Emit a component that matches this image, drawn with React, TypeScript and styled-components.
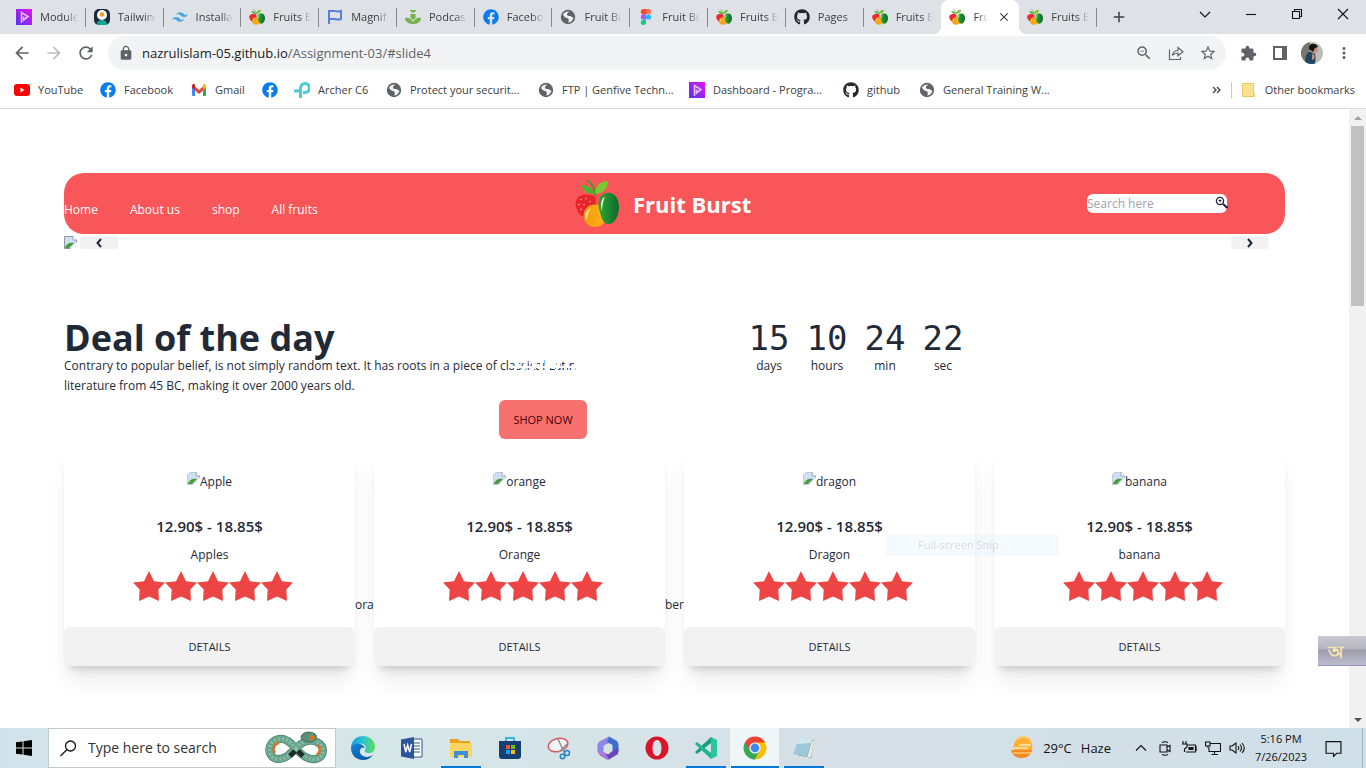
import React from 'react';
import styled, { createGlobalStyle, css } from 'styled-components';
import {
  MdAdd, MdArrowBack, MdArrowForward, MdClose, MdExtension, MdLock, MdMoreVert, MdRefresh, MdStarBorder, MdZoomOut,
} from 'react-icons/md';
import { FaFacebook, FaGithub } from 'react-icons/fa';

const GlobalStyle = createGlobalStyle`
  *, *::before, *::after { box-sizing: border-box; }
  body { margin: 0; background: #fff; color: #1f2937; font: 12px/20px "Open Sans", "Noto Sans", sans-serif; overflow: hidden; }
  button, input { font: inherit; color: inherit; border: 0; padding: 0; background: none; }
  a { color: inherit; text-decoration: none; }
  h1, p { margin: 0; }
  svg { display: block; flex: none; }
`;

/* ---------- browser frame ---------- */

const Screen = styled.div`
  display: flex;
  flex-direction: column;
  height: 100vh;
`;

const TabStrip = styled.header`
  display: flex;
  height: 34px;
  padding-left: 8px;
  background: #dee1e6;
  color: #3c4043;
`;

const TabList = styled.div`
  flex: 0 1 1089px;
  min-width: 0;
  display: grid;
  grid-template-columns: repeat(14, minmax(0, 1fr));
`;

const Tab = styled.button<{ $active?: boolean; $divider?: boolean }>`
  position: relative;
  display: flex;
  align-items: center;
  gap: 8px;
  padding: 0 8px;
  min-width: 0;
  ${(p) => p.$divider && css`
    background: linear-gradient(#85888d, #85888d) right 8px / 1px 19px no-repeat;
  `}
  ${(p) => p.$active && css`
    background: #fff;
    border-radius: 8px 8px 0 0;
    &::before, &::after {
      content: '';
      position: absolute;
      bottom: 0;
      width: 8px;
      height: 8px;
    }
    &::before { right: 100%; background: radial-gradient(circle at 0 0, transparent 8px, #fff 8px); }
    &::after { left: 100%; background: radial-gradient(circle at 100% 0, transparent 8px, #fff 8px); }
  `}
`;

const TabTitle = styled.span`
  flex: 1;
  min-width: 0;
  overflow: hidden;
  white-space: nowrap;
  text-align: left;
  font-size: 11px;
  mask-image: linear-gradient(to left, transparent 0, #000 12px);
`;

const NewTab = styled.button`
  display: grid;
  place-items: center;
  width: 44px;
`;

const WindowButtons = styled.div`
  display: flex;
  margin-left: auto;
  height: 28px;
`;

const WindowButton = styled.button`
  display: grid;
  place-items: center;
  width: 46px;
  color: #111;
`;

const Toolbar = styled.div`
  display: flex;
  align-items: center;
  height: 38px;
  padding: 0 6px 0 12px;
  color: #5f6368;
`;

const IconButton = styled.button<{ $w?: number; $faded?: boolean }>`
  display: grid;
  place-items: center;
  flex: none;
  width: ${(p) => p.$w ?? 32}px;
  height: 32px;
  color: ${(p) => (p.$faded ? '#bdbfc2' : '#5f6368')};
`;

const Omnibox = styled.div`
  flex: 1;
  min-width: 0;
  display: flex;
  align-items: center;
  height: 34px;
  margin: 0 6px 0 12px;
  padding: 0 2px 0 10px;
  border-radius: 17px;
  background: #f1f3f4;
`;

const Address = styled.a`
  flex: 1;
  min-width: 0;
  margin-left: 8px;
  font-size: 13px;
  line-height: 24px;
  white-space: nowrap;
  overflow: hidden;
  color: #5f6368;
  b { font-weight: 400; color: #202124; }
`;

const BookmarkBar = styled.nav`
  display: flex;
  align-items: center;
  height: 37px;
  padding: 0 11px 0 14px;
  border-bottom: 1px solid #dadce0;
  color: #3c4043;
  font-size: 11px;
`;

const Bookmark = styled.a<{ $w: number }>`
  display: flex;
  align-items: center;
  gap: 8px;
  flex: 0 0 ${(p) => p.$w}px;
  white-space: nowrap;
`;

const BookmarkEnd = styled.div`
  display: flex;
  align-items: center;
  gap: 10px;
  margin-left: auto;
  white-space: nowrap;
`;

const Rule = styled.span`
  width: 1px;
  height: 16px;
  background: #c6c8cb;
`;

const OtherLink = styled.a`
  display: flex;
  align-items: center;
  gap: 10px;
`;

/* ---------- web page ---------- */

const Viewport = styled.div`
  position: relative;
  flex: 1;
  min-height: 0;
  display: flex;
`;

const Page = styled.main`
  flex: 1;
  min-width: 0;
  padding: 64px;
  overflow: hidden;
`;

const ScrollTrack = styled.div`
  display: flex;
  flex-direction: column;
  align-items: center;
  width: 17px;
  background: #f1f1f1;
`;

const ScrollArrow = styled.button`
  display: grid;
  place-items: center;
  width: 17px;
  height: 17px;
`;

const ScrollThumb = styled.div`
  width: 13px;
  height: 29%;
  margin-bottom: auto;
  background: #c1c1c1;
`;

const SiteHeader = styled.header`
  display: grid;
  grid-template-columns: 511fr 512fr 198fr;
  align-items: center;
  height: 61px;
  border-radius: 20px;
  background: #f95659;
  color: #fff;
`;

const SiteNav = styled.nav`
  display: flex;
  gap: 32px;
  padding-top: 12px;
`;

const Brand = styled.div`
  display: flex;
  align-items: center;
  gap: 14px;
  font-size: 22px;
  line-height: 32px;
  font-weight: 700;
`;

const SearchField = styled.label`
  position: relative;
  width: 140px;
  height: 19px;
  input {
    display: block;
    width: 100%;
    height: 19px;
    border-radius: 6px;
    background: #fff;
    color: #1f2937;
    &::placeholder { color: #9ca3af; opacity: 1; }
  }
  svg { position: absolute; top: 2px; right: -1px; }
`;

const Slide = styled.section`
  display: flex;
  align-items: flex-start;
  gap: 3px;
  height: 86px;
  padding: 2px 16px 0 0;
`;

const SlideButton = styled.button<{ $end?: boolean }>`
  display: grid;
  place-items: center;
  width: 38px;
  height: 13px;
  border-radius: 3px;
  background: #f2f2f2;
  margin-left: ${(p) => (p.$end ? 'auto' : '0')};
`;

const Deal = styled.section`
  display: grid;
  grid-template-columns: 523fr 536fr;
  column-gap: 162px;
`;

const DealTitle = styled.h1`
  font-size: 36px;
  line-height: 36px;
  font-weight: 700;
`;

const Worn = styled.span`
  position: relative;
  &::after {
    content: '';
    position: absolute;
    inset: 0;
    background:
      repeating-linear-gradient(105deg, #fff 0 3px, transparent 3px 8px),
      linear-gradient(transparent 50%, #fff 50% 65%, transparent 65%);
  }
`;

const ShopButton = styled.button`
  display: block;
  margin: 4px 0 0 auto;
  width: 88px;
  height: 39px;
  border-radius: 6px;
  background: #f87171;
  color: #470000;
  font-size: 11px;
  font-weight: 500;
`;

const Countdown = styled.div`
  display: flex;
  gap: 18px;
  align-items: flex-start;
`;

const CountItem = styled.div`
  width: 40px;
  text-align: center;
`;

const CountValue = styled.div`
  display: flex;
  justify-content: center;
  font: 34px/36px "DejaVu Sans Mono", monospace;
`;

const Cards = styled.section`
  display: grid;
  grid-template-columns: repeat(4, minmax(0, 1fr));
  gap: 19px;
  margin-top: 5px;
`;

const Card = styled.article`
  position: relative;
  display: flex;
  flex-direction: column;
  align-items: center;
  padding-top: 28px;
  border-radius: 13px 13px 6px 6px;
  background: #fff;
  box-shadow: 0 20px 25px -5px rgba(0, 0, 0, 0.08), 0 8px 10px -6px rgba(0, 0, 0, 0.2);
`;

const CardPicture = styled.figure`
  display: flex;
  margin: 0;
  height: 20px;
`;

const Price = styled.div`
  margin-top: 24px;
  font-size: 15px;
  font-weight: 600;
`;

const CardName = styled.div`
  margin-top: 9px;
`;

const Stars = styled.div`
  display: flex;
  padding-left: 7px;
  margin: 5px 0 25px;
`;

const DetailsButton = styled.button`
  width: 100%;
  height: 39px;
  border-radius: 6px;
  background: #f2f2f2;
  font-size: 11px;
  font-weight: 500;
`;

const Peek = styled.span`
  position: absolute;
  left: 100%;
  top: 151px;
  width: 19px;
  white-space: nowrap;
`;

const SnipGhost = styled.div`
  position: absolute;
  right: 307px;
  top: 425px;
  width: 173px;
  height: 22px;
  padding-left: 32px;
  line-height: 22px;
  font-size: 11px;
  color: rgba(120, 100, 110, 0.22);
  background: rgba(214, 236, 250, 0.28);
`;

const KeyboardBadge = styled.div`
  position: absolute;
  right: 0;
  top: 527px;
  width: 48px;
  height: 30px;
  display: grid;
  place-items: center;
  padding-right: 12px;
  background: linear-gradient(#c9c9d3, #b4b4c0 45%, #9d9daa 50%, #bdbdd2);
  border-bottom: 1px solid #9095b8;
  color: #f8e7ad;
  font-size: 18px;
  font-weight: 700;
  line-height: 28px;
`;

/* ---------- task bar ---------- */

const TaskBar = styled.footer`
  display: flex;
  height: 40px;
  background: linear-gradient(90deg, #d2e2ea, #d5e6e8 30%, #d6e0e6 60%, #cfdfe8);
  color: #111;
`;

const StartButton = styled.button`
  display: grid;
  place-items: center;
  width: 48px;
`;

const TaskSearch = styled.label`
  display: flex;
  align-items: center;
  width: 288px;
  margin-right: 2px;
  padding: 0 8px 0 11px;
  border: 1px solid #c4c9cc;
  background: #fff;
  input {
    flex: 1;
    min-width: 0;
    margin-left: 11px;
    font-size: 14px;
    &::placeholder { color: #333; opacity: 1; }
  }
`;

const TaskButton = styled.button<{ $open?: boolean; $front?: boolean }>`
  display: grid;
  place-items: center;
  width: 49px;
  ${(p) => p.$open && css`background: linear-gradient(#0078d7, #0078d7) center bottom / 40px 2px no-repeat;`}
  ${(p) => p.$front && css`background: linear-gradient(#0078d7, #0078d7) center bottom / 48px 2px no-repeat, #f0f5f8;`}
`;

const Tray = styled.div`
  display: flex;
  align-items: center;
  margin-left: auto;
  padding-right: 3px;
`;

const Weather = styled.button`
  display: flex;
  align-items: center;
  gap: 9px;
  margin-right: 18px;
  font-size: 13px;
`;

const TrayButton = styled.button`
  display: grid;
  place-items: center;
  width: 24px;
  height: 40px;
`;

const Clock = styled.time`
  width: 64px;
  text-align: center;
  font-size: 11px;
  line-height: 18px;
`;

const Notices = styled.button`
  display: grid;
  place-items: center;
  width: 40px;
  height: 40px;
  margin-right: 9px;
`;

const Edge = styled.span`
  width: 1px;
  height: 40px;
  background: #a9b8c1;
`;

/* ---------- drawings ---------- */

const Pheron = () => (
  <svg width="16" height="16" viewBox="0 0 16 16" aria-hidden="true">
    <defs><linearGradient id="ph" x1="0" x2="1" y1="1" y2="0"><stop stopColor="#5a2ff0" /><stop offset="1" stopColor="#e414ee" /></linearGradient></defs>
    <rect width="16" height="16" fill="url(#ph)" />
    <path d="M5.500 14V3.500L12 7.500 7.500 11V7.500" fill="none" stroke="#fff" strokeOpacity=".7" strokeWidth="1.600" />
  </svg>
);

const Astro = () => (
  <svg width="16" height="16" viewBox="0 0 16 16" aria-hidden="true">
    <rect width="16" height="16" rx="5" fill="#1c2a3c" />
    <circle cx="8" cy="6" r="5" fill="#fff" /><circle cx="8" cy="5.500" r="2.300" fill="#f59a23" />
    <path d="M3 16c0-4 2-5 5-5s5 1 5 5z" fill="#12a594" />
  </svg>
);

const Tailwind = () => (
  <svg width="16" height="16" viewBox="0 0 24 24" fill="#44a8e0" aria-hidden="true">
    <path d="M12 4.800c-3.200 0-5.200 1.600-6 4.800 1.200-1.600 2.600-2.200 4.200-1.800.913.228 1.565.89 2.288 1.624C13.666 10.618 15.027 12 18 12c3.200 0 5.200-1.600 6-4.800-1.200 1.600-2.600 2.200-4.200 1.800-.913-.228-1.565-.89-2.288-1.624C16.337 6.182 14.976 4.800 12 4.800zM6 12c-3.200 0-5.200 1.600-6 4.800 1.200-1.600 2.600-2.200 4.200-1.800.913.228 1.565.89 2.288 1.624C7.666 17.818 9.027 19.200 12 19.200c3.200 0 5.200-1.600 6-4.800-1.200 1.600-2.600 2.200-4.200 1.800-.913-.228-1.565-.89-2.288-1.624C10.337 13.382 8.976 12 6 12z" />
  </svg>
);

const Fruit = ({ w = 16, h = 16 }: { w?: number; h?: number }) => (
  <svg width={w} height={h} viewBox="0 0 44 50" preserveAspectRatio="none" aria-hidden="true">
    <defs>
      <linearGradient id="mango"><stop stopColor="#2fa52f" /><stop offset="1" stopColor="#0b6b31" /></linearGradient>
      <linearGradient id="orng" x1="0" x2="1"><stop stopColor="#f79a10" /><stop offset="1" stopColor="#fdb515" /></linearGradient>
    </defs>
    <path d="M20 18C16 15 4 14 1 22c-2 7 3 15 9 18 7-4 13-12 10-22z" fill="#e8232b" />
    <g fill="#ffb3a8"><circle cx="6" cy="21" r=".8" /><circle cx="11" cy="20" r=".8" /><circle cx="4" cy="26" r=".8" /><circle cx="9" cy="26" r=".8" /><circle cx="6" cy="31" r=".8" /><circle cx="15" cy="23" r=".8" /></g>
    <circle cx="20" cy="37.500" r="11.500" fill="url(#orng)" />
    <path d="M12 42c-3-6 0-11 4-12-3 4-4 7-4 12z" fill="#ffeaa0" />
    <path d="M29 15c9-4 15 4 15 13 0 10-5 18-10 18-7 0-8-9-10-16-1-7 0-13 5-15z" fill="url(#mango)" />
    <path d="M27 33c-2-7-1-13 3-15-2 5-3 9-3 15z" fill="#eaffd8" />
    <path d="M20 17C20 10 17 4 12 1M20 17c1-6 3-9 7-12" fill="none" stroke="#3f9b2b" strokeWidth="1.800" />
    <path d="M19 15C12 16 8 12 6 6c7 0 12 3 13 9z" fill="#51b12c" />
    <path d="M20 15c0-8 5-13 13-13 0 8-5 13-13 13z" fill="#7cc832" />
  </svg>
);

const Flag = () => (
  <svg width="16" height="16" viewBox="0 0 16 16" fill="none" stroke="#5b7fd8" strokeWidth="2" aria-hidden="true">
    <path d="M2 15V2h6c2 0 3 1.500 6 0v8c-3 1.500-5 0-7 0H2" />
  </svg>
);

const Podcast = () => (
  <svg width="16" height="16" viewBox="0 0 16 16" fill="#7bb04f" aria-hidden="true">
    <path d="M5 1h6v1L8 4 5 2zM5.500 5h5v4l-2.500 2-2.500-2zM0 9c4-1 6 1 8 4 2-3 4-5 8-4 0 4-4 6-8 6S0 13 0 9z" />
  </svg>
);

const Fb = () => <FaFacebook size={16} color="#0a7cf0" />;
const Hub = () => <FaGithub size={16} color="#24292f" />;

const Globe = () => (
  <svg width="16" height="16" viewBox="0 0 16 16" aria-hidden="true">
    <circle cx="8" cy="8" r="7.200" fill="#5f6368" />
    <path d="M3 5.500c1.500-2.500 4-3.300 6.500-3C8 3.500 7 4 7 5.500c0 1 1.500 1.500 3 1.500s1.500 1.500 3.500 1.500c-.5 3-3 5-5.500 5 1-1.500 1-2.500.5-3.500C8 8.500 4.500 9.500 3 5.500z" fill="#f1f3f4" />
  </svg>
);

const Figma = () => (
  <svg width="16" height="16" viewBox="0 0 16 16" aria-hidden="true">
    <path d="M8 0H5.500a2.600 2.600 0 0 0 0 5.300H8z" fill="#f24e1e" /><path d="M8 0h2.500a2.600 2.600 0 0 1 0 5.300H8z" fill="#ff7262" />
    <path d="M8 5.300H5.500a2.600 2.600 0 0 0 0 5.300H8z" fill="#a259ff" /><circle cx="10.500" cy="8" r="2.600" fill="#1abcfe" />
    <path d="M5.500 10.700H8v2.600a2.600 2.600 0 1 1-2.500-2.600z" fill="#0acf83" />
  </svg>
);

const YouTube = () => (
  <svg width="16" height="16" viewBox="0 0 16 16" aria-hidden="true"><rect y="2" width="16" height="12" rx="3" fill="#f00" /><path d="m6.500 5.500 4 2.500-4 2.500z" fill="#fff" /></svg>
);

const Gmail = () => (
  <svg width="16" height="16" viewBox="0 0 16 16" aria-hidden="true">
    <path d="M1 4h3v10H2a1 1 0 0 1-1-1z" fill="#4285f4" /><path d="M12 4h3v9a1 1 0 0 1-1 1h-2z" fill="#34a853" />
    <path d="M4 4.500 8 8l4-3.500V8.500L8 12 4 8.500z" fill="#ea4335" /><path d="M1 4c0-2 2-2.500 3-1.500V8L1 5.500z" fill="#c5221f" /><path d="M15 4c0-2-2-2.500-3-1.500V8l3-2.500z" fill="#fbbc04" />
  </svg>
);

const TpLink = () => (
  <svg width="16" height="16" viewBox="0 0 16 16" fill="none" stroke="#4acbd6" strokeWidth="3" aria-hidden="true">
    <path d="M6.500 16V6a4.500 4.500 0 1 1 4.500 4.500H9" /><path d="M0 9h5" />
  </svg>
);

const Share = () => (
  <svg width="16" height="16" viewBox="0 0 16 16" fill="none" stroke="#5f6368" strokeWidth="1.200" aria-hidden="true">
    <path d="M1.500 4.500v10h11V12M4.500 10.500C5 7 7 5.500 10 5.500V2.500l5 4.300-5 4V8C8 8 6 8.500 4.500 10.500z" />
  </svg>
);

const Avatar = () => (
  <svg width="22" height="22" viewBox="0 0 22 22" aria-hidden="true">
    <defs><clipPath id="av"><circle cx="11" cy="11" r="11" /></clipPath></defs>
    <g clipPath="url(#av)">
      <rect width="22" height="22" fill="#b9bfb4" /><path d="M0 0h9v22H0z" fill="#77776f" />
      <path d="M4 22c0-8 2-13 7-12 4 0 4 5 3 12z" fill="#1f4560" /><path d="M10 4h6l1 5-4 3-3-2z" fill="#c98f76" />
      <path d="M8 7c-1-6 7-7 9-2l-3 1-2 4z" fill="#17130f" /><path d="M11 12c3 0 3 3 2 5l-2 1z" fill="#c98f76" />
    </g>
  </svg>
);

const Folder = () => (
  <svg width="13" height="16" viewBox="0 0 13 16" aria-hidden="true"><path d="M.5 1.500h11v13H.5z" fill="#fde293" stroke="#e6c65c" /><path d="M11 11h2v4h-2z" fill="#f0cf6a" /></svg>
);

const Broken = ({ round }: { round?: boolean }) => (
  <svg width="13" height="13" viewBox="0 0 13 13" aria-hidden="true">
    <path d={round ? 'M0 5Q1 0 6 0h3l4 4v9H0z' : 'M.5.5H9l3.500 3.500v8.500H.5z'} fill="#cfe0f5" stroke="#8f999f" strokeWidth={round ? 0.5 : 1} />
    <path d="M1 12c1-5 6-6 9-5l-5 5z" fill="#4a9b3c" /><path d="m6 13 7-7v7z" fill="#fff" /><path d="M9 0v4h4" fill="#fff" stroke="#8f999f" strokeWidth=".8" />
  </svg>
);

const Lens = () => (
  <svg width="13" height="13" viewBox="0 0 13 13" fill="none" stroke="#221c38" aria-hidden="true">
    <circle cx="5" cy="5" r="3.600" strokeWidth="1.300" /><path d="m8 8 4.500 4" strokeWidth="2" /><path d="M3.500 4.500h3M5 3.500v3" strokeWidth=".9" />
  </svg>
);

const Chevron = ({ d }: { d: string }) => (
  <svg width="8" height="10" viewBox="0 0 8 10" fill="none" stroke="#1f2937" strokeWidth="2" aria-hidden="true"><path d={d} /></svg>
);

const Star = () => (
  <svg width="32" height="32" viewBox="0 0 32 32" fill="#ef4444" aria-hidden="true">
    <path d="M16 1 21 11.300 32 12.600 25.300 19.500 26 31 16 26.600 6 31 6.700 19.500 0 12.600 11 11.300z" />
  </svg>
);

const Snake = () => (
  <svg width="62" height="34" viewBox="0 0 62 34" fill="none" aria-hidden="true">
    <path d="M31 18C24 9 19 7 14 8 2 10 1 26 12 28c8 1 13-5 19-11S44 7 52 11c9 5 7 15-1 17-8 1-13-3-20-10" stroke="#3d6b5e" strokeWidth="8" />
    <path d="M31 18C24 9 19 7 14 8 2 10 1 26 12 28c8 1 13-5 19-11S44 7 52 11c9 5 7 15-1 17-8 1-13-3-20-10" stroke="#6aa78f" strokeWidth="7" />
    <path d="M31 18C24 9 19 7 14 8 2 10 1 26 12 28c8 1 13-5 19-11S44 7 52 11c9 5 7 15-1 17-8 1-13-3-20-10" stroke="#93c0a8" strokeWidth="3" strokeDasharray="1.500 2.500" />
    <path d="M25 25l5-5M33 20l5 5" stroke="#1d2b28" strokeWidth="5" />
    <path d="M10 22c-3-4-1-9 4-10M53 14c3 3 2 7-1 10" stroke="#d2762c" strokeWidth="2.500" />
    <path d="M36 6c1-5 10-7 15-2 1 3-1 7-5 7-5 0-9-1-10-5z" fill="#5b9079" stroke="#3d6b5e" /><path d="M44 5c3-2 6 0 6 2s-4 3-6 1z" fill="#d2762c" />
  </svg>
);

const Art = ({ children }: { children: React.ReactNode }) => (
  <svg width="24" height="24" viewBox="0 0 24 24" aria-hidden="true">{children}</svg>
);

const EdgeLogo = () => (
  <Art>
    <defs>
      <linearGradient id="eg" x1="0" x2="1" y1="0" y2="0"><stop stopColor="#1b9de2" /><stop offset=".5" stopColor="#2bc3d2" /><stop offset="1" stopColor="#5fdc55" /></linearGradient>
      <linearGradient id="eg2" x1="0" x2="1" y1="0" y2="1"><stop stopColor="#1583d8" /><stop offset="1" stopColor="#0c4f9c" /></linearGradient>
    </defs>
    <path d="M0 12C0 5 5 0 12 0s12 5 12 11c0 4-3 6-6 6-4 0-5-2-3.500-4C16 9 12 7 8 8c-4 0-7 2-8 4z" fill="url(#eg)" />
    <path d="M0 12c1-3 4-5 8-4 3 0 5 2 6 4-1-1-4-1-5 2-1 4 3 7 7 7 2 0 4-1 6-2-2 3-6 5-10 5C5 24 0 19 0 12z" fill="url(#eg2)" />
  </Art>
);

const Word = () => (
  <Art>
    <path d="M12 3h10v18H12z" fill="#fff" stroke="#2b579a" /><path d="M14 7h6M14 10h6M14 13h6M14 16h6" stroke="#2b579a" />
    <path d="M1 3.500 14 1v22L1 20.500z" fill="#2b579a" /><path d="m4 8 1.800 8L7.700 9l2 7L11.500 8" fill="none" stroke="#fff" strokeWidth="1.500" />
  </Art>
);

const Explorer = () => (
  <Art>
    <path d="M1 3h8l2 2h10v5H1z" fill="#e8a21c" /><path d="M1 7h22v14H1z" fill="#fcd462" /><path d="M5 22v-7h14v7h-4v-3H9v3z" fill="#3a8fd6" />
  </Art>
);

const Store = () => (
  <Art>
    <path d="M8 6V2h8v4" fill="none" stroke="#3bb3ef" strokeWidth="2" /><path d="M1 5h22v15a3 3 0 0 1-3 3H4a3 3 0 0 1-3-3z" fill="#153e75" />
    <path d="M8 9h4v4H8z" fill="#f25022" /><path d="M13 9h4v4h-4z" fill="#7fba00" /><path d="M8 14h4v4H8z" fill="#00a4ef" /><path d="M13 14h4v4h-4z" fill="#ffb900" />
  </Art>
);

const Snip = () => (
  <Art>
    <ellipse cx="11" cy="9" rx="10" ry="6.500" transform="rotate(-15 11 9)" fill="#f4f4f6" stroke="#d95b62" strokeWidth="1.500" />
    <path d="m11 3 6 13M20 8l-8 8" stroke="#8b9298" strokeWidth="1.500" /><circle cx="20" cy="17" r="2.500" fill="none" stroke="#2a83c4" strokeWidth="1.600" /><circle cx="15.500" cy="20.500" r="2.200" fill="none" stroke="#2a83c4" strokeWidth="1.600" />
  </Art>
);

const Office = () => (
  <Art>
    <path d="M13 .5 3.500 5.500 1.500 8v8l6 2.500V10l8-4.500z" fill="#8f86e8" /><path d="m13 .5 8 4.500 1.500 3v8l-6-1V9L11 6z" fill="#3d6fd0" />
    <path d="m22.500 12-.5 6-9 5.500h-2l-8-5 5-2 4 2 4.500-3.500z" fill="#6b45b8" /><path d="m1.500 16 1.500 2 8 5h2L8 16z" fill="#b07be0" /><circle cx="12" cy="12" r="4" fill="#d6e0e6" />
  </Art>
);

const Opera = () => (
  <Art><path d="M12 .5a11.500 11.500 0 1 0 0 23 11.500 11.500 0 0 0 0-23zm0 3.500c3 0 4.500 4 4.500 8s-1.500 8-4.500 8-4.500-4-4.500-8S9 4 12 4z" fillRule="evenodd" fill="#d9152b" /></Art>
);

const Code = () => (
  <Art>
    <path d="m17 1 6 3v16l-6 3z" fill="#2dc5a0" /><path d="M17 1v6L3 18l-2-2z" fill="#14a07f" /><path d="M17 23v-6L3 6 1 8z" fill="#1bb592" />
  </Art>
);

const Chrome = () => (
  <Art>
    <path d="M12 12 2 6.300A11.500 11.500 0 0 1 22 6.300z" fill="#ea4335" /><path d="M12 12 22 6.300A11.500 11.500 0 0 1 12 23.500z" fill="#fbbc04" /><path d="M12 12v11.500A11.500 11.500 0 0 1 2 6.300z" fill="#34a853" />
    <path d="M12 6.500h10.200L17 15z" fill="#fbbc04" /><path d="m16.800 14.800-5 8.700-2-5z" fill="#34a853" fillOpacity=".9" /><path d="M2 6.300 7.200 15l2-8z" fill="#ea4335" />
    <circle cx="12" cy="12" r="5.600" fill="#fff" /><circle cx="12" cy="12" r="4.400" fill="#4285f4" />
  </Art>
);

const Notepad = () => (
  <Art>
    <path d="m7 3 15 1-3 18-14-3z" fill="#707d84" /><path d="m7 2 13 1-5 18-14-3z" fill="#9cc9d8" /><path d="m7 2 13 1-1 4L5 8z" fill="#d4e9ee" /><path d="m20 4 2 1-3 16-4 1z" fill="#eceade" />
  </Art>
);

const Haze = () => (
  <Art>
    <circle cx="13" cy="11" r="9.500" fill="#fbb034" /><path d="M6 4a10 10 0 0 1 15 1" stroke="#fbc96b" strokeWidth="2" fill="none" />
    <path d="M9 9h12M4 12h14" stroke="#fde6b8" strokeWidth="1.500" /><path d="M1 14h21c-1 5-5 8-10 8-6 0-10-3-11-8z" fill="#f18a21" /><path d="M3 17h18" stroke="#fbc96b" strokeWidth="1.500" />
  </Art>
);

const Line = ({ d, w = 16 }: { d: string; w?: number }) => (
  <svg width={w} height={w} viewBox="0 0 16 16" fill="none" stroke="#111" strokeWidth="1.100" aria-hidden="true"><path d={d} /></svg>
);

/* ---------- data ---------- */

const tabs = [
  { title: 'Module', Icon: Pheron }, { title: 'Tailwind', Icon: Astro }, { title: 'Installa', Icon: Tailwind },
  { title: 'Fruits B', Icon: Fruit }, { title: 'Magnif', Icon: Flag }, { title: 'Podcas', Icon: Podcast },
  { title: 'Facebo', Icon: Fb }, { title: 'Fruit Bu', Icon: Globe }, { title: 'Fruit Bu', Icon: Figma },
  { title: 'Fruits B', Icon: Fruit }, { title: 'Pages', Icon: Hub }, { title: 'Fruits B', Icon: Fruit },
  { title: 'Fru', Icon: Fruit, active: true }, { title: 'Fruits B', Icon: Fruit },
];

const bookmarks = [
  { label: 'YouTube', w: 86, Icon: YouTube }, { label: 'Facebook', w: 91, Icon: Fb }, { label: 'Gmail', w: 71, Icon: Gmail },
  { label: '', w: 32, Icon: Fb }, { label: 'Archer C6', w: 92, Icon: TpLink }, { label: 'Protect your securit...', w: 152, Icon: Globe },
  { label: 'FTP | Genfive Techn...', w: 151, Icon: Globe }, { label: 'Dashboard - Progra...', w: 154, Icon: Pheron },
  { label: 'github', w: 76, Icon: Hub }, { label: 'General Training W...', w: 150, Icon: Globe },
];

const countdown = [['15', 'days'], ['10', 'hours'], ['24', 'min'], ['22', 'sec']];

const products = [
  { alt: 'Apple', name: 'Apples', peek: 'ora' }, { alt: 'orange', name: 'Orange', peek: 'ber' },
  { alt: 'dragon', name: 'Dragon' }, { alt: 'banana', name: 'banana' },
];

const apps = [
  { name: 'Edge', Icon: EdgeLogo }, { name: 'Word', Icon: Word }, { name: 'File Explorer', Icon: Explorer, open: true },
  { name: 'Store', Icon: Store }, { name: 'Snipping Tool', Icon: Snip }, { name: 'Office', Icon: Office },
  { name: 'Opera', Icon: Opera }, { name: 'Code', Icon: Code, open: true }, { name: 'Chrome', Icon: Chrome, front: true },
  { name: 'Notepad', Icon: Notepad, open: true },
];

const trayIcons = [
  { name: 'Hidden icons', d: 'm3 10.500 5-5 5 5' },
  { name: 'Camera', d: 'M3 5h7v7H3zM10 7l3-1.500v6L10 10M5 2.500q3-1.500 6 0M5 14.500q3 1.500 6 0' },
  { name: 'Battery', d: 'M6 5h8.500v7H5M14.500 7H16v3h-1.500M8 7.500h4v2H8zM8 8.500h4M2 1v3M5 1v3M1 4h5v3L3.500 9v3' },
  { name: 'Network', d: 'M5 3.500h10.500v8H4V7.500M9.500 11.500v3M6.500 14.500h6.500M.5 2H5v4H.5zM3 6v2' },
  { name: 'Volume', d: 'M1 6h2l4-3v10l-4-3H1zM9 6q1.500 2 0 4M11 4.500q3 3.500 0 7M13 3q4.500 5 0 10' },
];

export default function App() {
  return (
    <Screen>
      <GlobalStyle />
      <TabStrip>
        <TabList role="tablist">
          {tabs.map(({ title, Icon, active }, i) => (
            <Tab key={i} role="tab" aria-selected={!!active} $active={active} $divider={!active && i !== 11}>
              <Icon />
              <TabTitle>{title}</TabTitle>
              {active && <MdClose size={14} color="#3c4043" />}
            </Tab>
          ))}
        </TabList>
        <NewTab aria-label="New tab"><MdAdd size={18} /></NewTab>
        <WindowButtons>
          <WindowButton aria-label="Search tabs"><Line d="m3 6 5 5 5-5" /></WindowButton>
          <WindowButton aria-label="Minimize"><Line d="M3 8.500h10" /></WindowButton>
          <WindowButton aria-label="Restore"><Line d="M3.500 5.500h7v7h-7zM5.500 5.500v-2h7v7h-2" /></WindowButton>
          <WindowButton aria-label="Close"><Line d="m3 3 10 10M13 3 3 13" /></WindowButton>
        </WindowButtons>
      </TabStrip>

      <Toolbar>
        <IconButton $w={20} aria-label="Back"><MdArrowBack size={20} /></IconButton>
        <IconButton $w={44} $faded aria-label="Forward"><MdArrowForward size={20} /></IconButton>
        <IconButton $w={20} aria-label="Reload"><MdRefresh size={20} /></IconButton>
        <Omnibox>
          <MdLock size={16} />
          <Address href="#slide4"><b>nazrulislam-05.github.io</b>/Assignment-03/#slide4</Address>
          <IconButton aria-label="Zoom"><MdZoomOut size={18} /></IconButton>
          <IconButton aria-label="Share"><Share /></IconButton>
          <IconButton aria-label="Bookmark this tab"><MdStarBorder size={18} /></IconButton>
        </Omnibox>
        <IconButton aria-label="Extensions"><MdExtension size={17} /></IconButton>
        <IconButton aria-label="Side panel">
          <svg width="14" height="14" viewBox="0 0 14 14" aria-hidden="true"><path d="M1 1h12v12H1z" fill="none" stroke="#5f6368" strokeWidth="2" /><path d="M9 1h4v12H9z" fill="#5f6368" /></svg>
        </IconButton>
        <IconButton aria-label="Profile"><Avatar /></IconButton>
        <IconButton aria-label="Menu"><MdMoreVert size={18} /></IconButton>
      </Toolbar>

      <BookmarkBar aria-label="Bookmarks">
        {bookmarks.map(({ label, w, Icon }, i) => (
          <Bookmark key={i} href="#" $w={w} aria-label={label || 'Facebook'}><Icon />{label}</Bookmark>
        ))}
        <BookmarkEnd>
          <button aria-label="More bookmarks">
            <svg width="9" height="8" viewBox="0 0 9 8" fill="none" stroke="#3c4043" strokeWidth="1.300" aria-hidden="true"><path d="m1 1 3 3-3 3M5 1l3 3-3 3" /></svg>
          </button>
          <Rule />
          <OtherLink href="#"><Folder />Other bookmarks</OtherLink>
        </BookmarkEnd>
      </BookmarkBar>

      <Viewport>
        <Page>
          <SiteHeader>
            <SiteNav>
              <a href="#">Home</a><a href="#">About us</a><a href="#">shop</a><a href="#">All fruits</a>
            </SiteNav>
            <Brand><Fruit w={44} h={49} />Fruit Burst</Brand>
            <SearchField><input type="text" placeholder="Search here" aria-label="Search here" /><Lens /></SearchField>
          </SiteHeader>

          <Slide>
            <Broken />
            <SlideButton aria-label="Previous slide"><Chevron d="M6 1 2.500 5 6 9" /></SlideButton>
            <SlideButton $end aria-label="Next slide"><Chevron d="m2 1 3.500 4L2 9" /></SlideButton>
          </Slide>

          <Deal>
            <div>
              <DealTitle>Deal of the day</DealTitle>
              <p>Contrary to popular belief, is not simply random text. It has roots in a piece of cl<Worn>assical Latin</Worn> literature from 45 BC, making it over 2000 years old.</p>
              <ShopButton>SHOP NOW</ShopButton>
            </div>
            <Countdown>
              {countdown.map(([value, unit]) => (
                <CountItem key={unit}><CountValue>{value}</CountValue>{unit}</CountItem>
              ))}
            </Countdown>
          </Deal>

          <Cards>
            {products.map(({ alt, name, peek }) => (
              <Card key={alt}>
                <CardPicture><Broken round />{alt}</CardPicture>
                <Price>12.90$ - 18.85$</Price>
                <CardName>{name}</CardName>
                <Stars role="img" aria-label="5 stars"><Star /><Star /><Star /><Star /><Star /></Stars>
                <DetailsButton>DETAILS</DetailsButton>
                {peek && <Peek>{peek}</Peek>}
              </Card>
            ))}
          </Cards>
        </Page>
        <ScrollTrack>
          <ScrollArrow aria-label="Scroll up"><svg width="8" height="4" viewBox="0 0 8 4" aria-hidden="true"><path d="m0 4 4-4 4 4z" fill="#a3a3a3" /></svg></ScrollArrow>
          <ScrollThumb />
          <ScrollArrow aria-label="Scroll down"><svg width="8" height="4" viewBox="0 0 8 4" aria-hidden="true"><path d="m0 0 4 4 4-4z" fill="#505050" /></svg></ScrollArrow>
        </ScrollTrack>
        <SnipGhost>Full-screen Snip</SnipGhost>
        <KeyboardBadge>অ</KeyboardBadge>
      </Viewport>

      <TaskBar>
        <StartButton aria-label="Start">
          <svg width="16" height="16" viewBox="0 0 16 16" aria-hidden="true"><path d="M0 2.300 6.500 1.400V7.500H0zM7.500 1.200 16 0v7.500H7.500zM0 8.500h6.500v6.100L0 13.700zM7.500 8.500H16V16l-8.500-1.200z" /></svg>
        </StartButton>
        <TaskSearch>
          <svg width="17" height="17" viewBox="0 0 17 17" fill="none" stroke="#111" strokeWidth="1.300" aria-hidden="true"><circle cx="10.500" cy="6" r="5" /><path d="M7 9.500.5 16" /></svg>
          <input type="text" placeholder="Type here to search" aria-label="Type here to search" />
          <Snake />
        </TaskSearch>
        {apps.map(({ name, Icon, open, front }) => (
          <TaskButton key={name} aria-label={name} $open={open} $front={front}><Icon /></TaskButton>
        ))}
        <Tray>
          <Weather><Haze /><span>29°C</span><span>Haze</span></Weather>
          {trayIcons.map(({ name, d }) => (
            <TrayButton key={name} aria-label={name}><Line d={d} /></TrayButton>
          ))}
          <Clock>5:16 PM<br />7/26/2023</Clock>
          <Notices aria-label="Notifications"><Line d="M1 1.500h14v11h-4l-3 3v-3H1z" w={17} /></Notices>
          <Edge />
        </Tray>
      </TaskBar>
    </Screen>
  );
}
